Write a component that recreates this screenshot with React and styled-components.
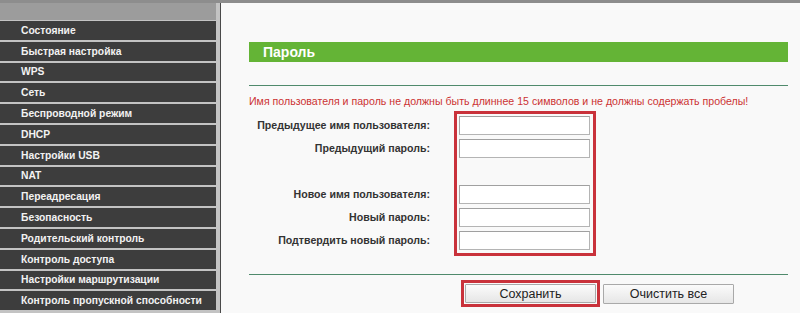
import React from 'react'
import styled, { createGlobalStyle } from 'styled-components'

const GlobalStyle = createGlobalStyle`
  html, body {
    margin: 0;
    padding: 0;
    background: #f9f9f9;
  }
  * {
    box-sizing: border-box;
  }
`

const Page = styled.div`
  display: flex;
  width: 800px;
  height: 313px;
  overflow: hidden;
  border-top: 3px solid #8d8d8d;
  font-family: "Liberation Sans", Arial, sans-serif;
`

const Sidebar = styled.nav`
  display: flex;
  flex-direction: column;
  gap: 2px;
  width: 221px;
  flex-shrink: 0;
  padding-right: 4px;
  background: #c3c3c3;
  border-right: 1px solid #4a4a4a;
`

const SideHeader = styled.div`
  height: 17px;
  margin-bottom: -1px;
  background: #9c9c9c;
`

const MenuItem = styled.div`
  display: flex;
  align-items: center;
  flex-shrink: 0;
  height: 18.8px;
  padding-left: 21px;
  background: #3d3d3d;
  color: #f2f2f2;
  font-size: 10.3px;
  font-weight: bold;
  white-space: nowrap;
`

const Content = styled.main`
  flex: 1;
  padding: 39px 12px 0 28px;
  background: #f9f9f9;
`

const TitleBar = styled.div`
  display: flex;
  align-items: center;
  height: 20px;
  padding-left: 14px;
  background: #64b436;
  color: #ffffff;
  font-size: 14px;
  font-weight: bold;
`

const Rule = styled.div`
  height: 1px;
  background: #4f8a6c;
  margin-top: ${p => p.$top}px;
`

const Warning = styled.p`
  margin: 8px 0 3px;
  color: #cc3333;
  font-size: 10.6px;
  line-height: 14px;
  white-space: nowrap;
`

const Form = styled.div`
  display: flex;
  align-items: flex-start;
`

const Labels = styled.div`
  display: flex;
  flex-direction: column;
  gap: 4px;
  width: 181px;
  margin: 5px 24px 0 0;
`

const Label = styled.div`
  height: 19px;
  line-height: 19px;
  text-align: right;
  color: #333333;
  font-size: 10.6px;
  font-weight: bold;
  white-space: nowrap;
`

const Highlight = styled.div`
  display: flex;
  flex-direction: column;
  gap: ${p => p.$gap || 0}px;
  border: 3px solid #c9323b;
  padding: ${p => p.$pad};
`

const Field = styled.input`
  display: block;
  width: 131px;
  height: 19px;
  margin: 0;
  border: 1px solid #b4b4b4;
  border-top-color: #a0a0a0;
  border-left-color: #a6a6a6;
  background: #ffffff;
  outline: none;
`

const Spacer = styled.div`
  height: 19px;
`

const Buttons = styled.div`
  display: flex;
  align-items: center;
  gap: 3px;
  margin-top: 5px;
  padding-left: 212px;
`

const Button = styled.button`
  width: 131px;
  height: ${p => p.$h || 19}px;
  margin: 0;
  padding: 0;
  border: 1px solid #a9a9a9;
  border-radius: 1px;
  background: linear-gradient(#fbfbfb, #e6e6e6);
  color: #222222;
  font-family: "Liberation Sans", Arial, sans-serif;
  font-size: 12.5px;
  cursor: pointer;
`

const menu = [
  'Состояние',
  'Быстрая настройка',
  'WPS',
  'Сеть',
  'Беспроводной режим',
  'DHCP',
  'Настройки USB',
  'NAT',
  'Переадресация',
  'Безопасность',
  'Родительский контроль',
  'Контроль доступа',
  'Настройки маршрутизации',
  'Контроль пропускной способности',
]

const App = () => {
  return (
    <>
      <GlobalStyle />
      <Page>
        <Sidebar>
          <SideHeader />
          {menu.map(item => (
            <MenuItem key={item}>{item}</MenuItem>
          ))}
        </Sidebar>
        <Content>
          <TitleBar>Пароль</TitleBar>
          <Rule $top={23} />
          <Warning>
            Имя пользователя и пароль не должны быть длиннее 15 символов и не должны содержать пробелы!
          </Warning>
          <Form>
            <Labels>
              <Label>Предыдущее имя пользователя:</Label>
              <Label>Предыдущий пароль:</Label>
              <Spacer />
              <Label>Новое имя пользователя:</Label>
              <Label>Новый пароль:</Label>
              <Label>Подтвердить новый пароль:</Label>
            </Labels>
            <Highlight $gap={4} $pad="2px 3px 3px 2px">
              <Field type="text" />
              <Field type="password" />
              <Spacer />
              <Field type="text" />
              <Field type="password" />
              <Field type="password" />
            </Highlight>
          </Form>
          <Rule $top={18} />
          <Buttons>
            <Highlight $pad="1px">
              <Button>Сохранить</Button>
            </Highlight>
            <Button $h={20}>Очистить все</Button>
          </Buttons>
        </Content>
      </Page>
    </>
  )
}

export default App
